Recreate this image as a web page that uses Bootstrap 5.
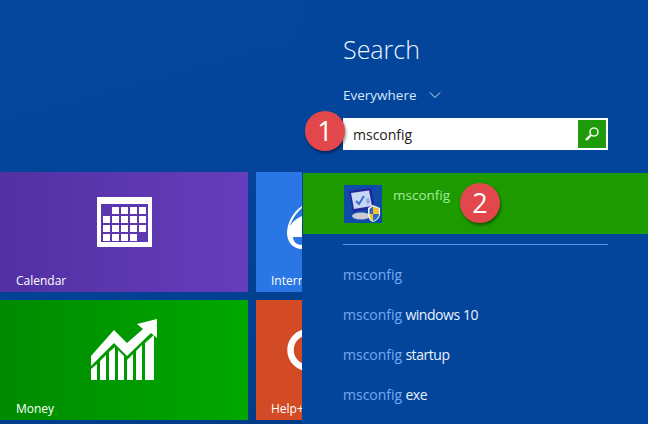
<!DOCTYPE html>
<html lang="en">
<head>
  <meta charset="UTF-8">
  <meta name="viewport" content="width=device-width, initial-scale=1.0">
  <title>Search msconfig</title>
  <link href="https://cdn.jsdelivr.net/npm/bootstrap@5.3.0/dist/css/bootstrap.min.css" rel="stylesheet">
  <style>
    html, body { height: 424px; overflow: hidden; }
    body {
      font-family: "Open Sans", "Noto Sans", sans-serif;
      background: #03459b;
      color: #fff;
    }
    .start {
      width: 302px;
      height: 424px;
      padding-top: 172px;
      overflow: hidden;
      flex: none;
      background: linear-gradient(165deg, #06479c 0%, #03439a 50%, #023c88 100%);
    }
    .tiles {
      display: grid;
      grid-template-columns: 248px 46px;
      grid-auto-rows: 120px;
      gap: 8px;
    }
    .tile {
      position: relative;
      overflow: hidden;
      display: flex;
      align-items: center;
      justify-content: center;
      padding-bottom: 21px;
    }
    .tile-label {
      position: absolute;
      left: 16px;
      bottom: 3px;
      font-size: 12px;
      line-height: 16px;
      white-space: nowrap;
    }
    .tile-calendar { background: linear-gradient(90deg, #5231a2, #663dbc); }
    .tile-money { background: linear-gradient(90deg, #008a00, #00a800); }
    .tile-ie { background: #2a76e4; }
    .tile-help { background: #d24b24; }
    .tile-ie .tile-label, .tile-help .tile-label { left: 15px; }
    .tile-ie svg, .tile-help svg { position: absolute; left: 31px; }
    .charm {
      flex: 1;
      position: relative;
      background: #03459b;
    }
    .charm-title {
      font-size: 25px;
      font-weight: 300;
      line-height: 32px;
      margin: 0;
      padding: 33px 0 0 41px;
      color: #eef6ff;
    }
    .scope {
      font-size: 13.5px;
      line-height: 20px;
      padding: 20px 0 0 41px;
      color: #d5e6ff;
    }
    .searchbox {
      margin: 13px 40px 0 41px;
      height: 32px;
      background: #fff;
      padding: 2px;
      color: #222;
      font-size: 14px;
    }
    .searchbox span { padding-left: 8px; }
    .search-btn {
      width: 28px;
      height: 28px;
      background: #1f9a0a;
    }
    .result {
      margin: 23px 0 0 1px;
      height: 61px;
      background: #1c9a00;
      padding: 12px 0 0 41px;
      gap: 11px;
    }
    .result-icon {
      width: 38px;
      height: 38px;
      background: #0f4ca8;
      flex: none;
    }
    .result-name {
      font-size: 13.5px;
      line-height: 20px;
      color: #a4eb9d;
    }
    .divider {
      height: 1px;
      margin: 10px 40px 0 41px;
      background: #5c96e6;
    }
    .suggest {
      list-style: none;
      margin: 10px 0 0;
      padding: 0 0 0 41px;
      font-size: 14px;
      line-height: 40px;
      letter-spacing: -.45px;
      color: #e9f2ff;
    }
    .suggest b { font-weight: 400; letter-spacing: 0; color: #76a9f0; }
    .step {
      position: absolute;
      width: 40px;
      height: 40px;
      border-radius: 50%;
      background: #e2474b;
      box-shadow: 1px 2px 3px rgba(0,0,0,.45);
      font-size: 27px;
      line-height: 40px;
      text-align: center;
      color: #fff;
    }
    .step-1 { left: 3px; top: 111px; }
    .step-2 { left: 158px; top: 183px; }
  </style>
</head>
<body class="d-flex">
  <!-- start screen tiles -->
  <div class="start">
    <div class="tiles">
      <div class="tile tile-calendar">
        <svg width="55" height="50" viewBox="0 0 55 50">
          <path fill="#fff" fill-rule="evenodd" d="M0 0H55V50H0ZM4 7V45H51V7Z"/>
          <g fill="#fff">
            <path d="M15 10h7v7h-7zM24 10h7v7h-7zM33 10h7v7h-7zM42 10h7v7h-7z"/>
            <path d="M6 19h7v7H6zM15 19h7v7h-7zM24 19h7v7h-7zM33 19h7v7h-7zM42 19h7v7h-7z"/>
            <path d="M6 28h7v7H6zM15 28h7v7h-7zM24 28h7v7h-7zM33 28h7v7h-7zM42 28h7v7h-7z"/>
            <path d="M6 37h7v7H6zM15 37h7v7h-7zM24 37h7v7h-7zM33 37h7v7h-7z"/>
          </g>
        </svg>
        <span class="tile-label">Calendar</span>
      </div>
      <div class="tile tile-ie">
        <svg width="30" height="60" viewBox="0 0 30 60">
          <path fill="#fff" d="M15 14C6 20 0 31 0 41 0 50 6 57 15 57V14Z"/>
          <path fill="#2a76e4" d="M6 45H15V53C10 53 6 50 6 45Z"/>
          <path fill="#2a76e4" d="M15 16C8 22 4 30 3 34 6 29 10 26 15 24Z"/>
        </svg>
        <span class="tile-label">Intern</span>
      </div>
      <div class="tile tile-money">
        <svg width="66" height="64" viewBox="0 0 66 64">
          <g fill="#fff">
            <path d="M0 38 23 12 36 25 52 11 46 6 66 1V20L60 15 36 38 23 25 0 48Z"/>
            <path d="M0 51 6 46V62H0ZM9 43 15 37V62H9ZM18 34 24 29V62H18ZM27 32 33 38V62H27ZM36 42 42 36V62H36ZM45 33 51 27V62H45ZM54 25 63 17V62H54Z"/>
          </g>
        </svg>
        <span class="tile-label">Money</span>
      </div>
      <div class="tile tile-help">
        <svg width="30" height="60" viewBox="0 0 30 60">
          <circle cx="21.500" cy="30" r="18" fill="none" stroke="#fff" stroke-width="6.500"/>
        </svg>
        <span class="tile-label">Help+</span>
      </div>
    </div>
  </div>

  <!-- search charm -->
  <div class="charm">
    <h1 class="charm-title">Search</h1>
    <div class="scope d-flex align-items-center gap-2">
      Everywhere
      <svg class="ms-1" width="12" height="8" viewBox="0 0 12 8"><path d="M1 1.5 6 6.5 11 1.5" fill="none" stroke="#d5e6ff" stroke-width="1"/></svg>
    </div>
    <div class="searchbox d-flex align-items-center justify-content-between">
      <span>msconfig</span>
      <div class="search-btn d-flex align-items-center justify-content-center">
        <svg width="16" height="16" viewBox="0 0 16 16">
          <circle cx="10" cy="6" r="4" fill="none" stroke="#dff5d8" stroke-width="1.6"/>
          <path d="M7 9 2 14" stroke="#fff" stroke-width="2.4"/>
        </svg>
      </div>
    </div>
    <div class="result d-flex">
      <div class="result-icon d-flex align-items-center justify-content-center">
        <svg width="38" height="38" viewBox="0 0 38 38">
          <path d="M5 6 27 3 31 23 9 27Z" fill="#23279a"/>
          <path d="M7 8 25 5.500 28 21 10 24Z" fill="#c9d6f5"/>
          <path d="M12 16l3 3 5-8" fill="none" stroke="#3a6fd0" stroke-width="2"/>
          <path d="M22 14 25 13 26 18 23 19Z" fill="#8fa6dc"/>
          <ellipse cx="17" cy="31" rx="9" ry="3.500" fill="#c9ccd6"/>
          <path d="M24 23 29 20 36 23V29C36 33 32 36 29 37 26 36 24 33 24 29Z" fill="#f1f4fb"/>
          <path d="M29 21.500 35 23.500V29H29ZM29 29V36C27 35 25.500 33 25.500 29Z" fill="#f0c22e"/>
          <path d="M29 21.500V29H25.500V24ZM29 29H35C35 32 32 35 29 36Z" fill="#2f68c8"/>
        </svg>
      </div>
      <div class="result-name">msconfig</div>
    </div>
    <div class="divider"></div>
    <ul class="suggest">
      <li><b>msconfig</b></li>
      <li><b>msconfig</b> windows 10</li>
      <li><b>msconfig</b> startup</li>
      <li><b>msconfig</b> exe</li>
    </ul>
    <div class="step step-1">1</div>
    <div class="step step-2">2</div>
  </div>
  <script src="https://cdn.jsdelivr.net/npm/bootstrap@5.3.3/dist/js/bootstrap.bundle.min.js"></script>
</body>
</html>
